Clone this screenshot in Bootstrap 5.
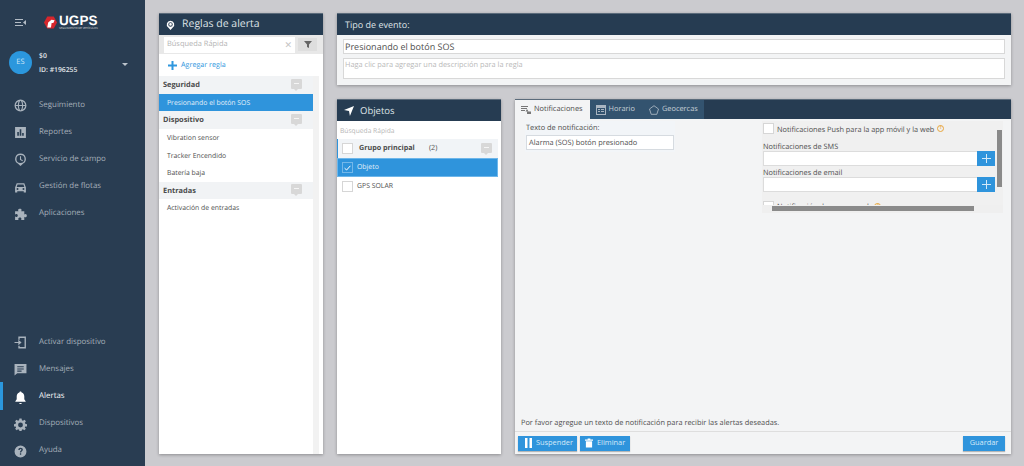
<!DOCTYPE html>
<html lang="es">
<head>
<meta charset="utf-8">
<title>Alertas</title>
<link href="https://cdn.jsdelivr.net/npm/bootstrap@5.3.0/dist/css/bootstrap.min.css" rel="stylesheet">
<style>
html,body{height:466px;overflow:hidden}
body{font-family:"Open Sans",sans-serif;font-size:7.4px;color:#4f4f4f;background:#cbcbcf;text-rendering:geometricPrecision}
.shell{height:466px}
.side{width:145px;background:#293d52;color:#a3adb8;flex:none}
.side svg{fill:#a9b3bd;flex:none}
.topline{height:40px;padding:4px 0 0 15px;gap:18px}
.logo-word{font-family:"Liberation Sans",sans-serif;font-weight:700;font-size:13.5px;color:#fff;line-height:11px;letter-spacing:.1px}
.logo-sub{font-size:2.8px;line-height:3px;color:#ddd;white-space:nowrap;margin-top:1px}
.userbox{height:47px;padding:10px 0 0 9px;gap:7px;color:#e4e8ec;font-size:6.8px;font-weight:600}
.avatar{width:23px;height:23px;border-radius:50%;background:#2b97dd;color:#cfe6f7;font-size:7.5px;font-weight:400;flex:none;margin-top:1px}
.user-lines{line-height:14px;flex:1;margin-top:-1px}
.caret-d{width:0;height:0;border:3px solid transparent;border-top:3.5px solid #bcc4cc;border-bottom:0;margin-right:17px;margin-left:auto}
.nav-it{height:27.2px;padding:2px 0 0 14px;gap:12px;font-size:7.9px;position:relative;color:#a3adb8}
.nav-it.on{color:#f2f4f6}
.nav-it.on svg{fill:#fff}
.nav-it.on::before{content:"";position:absolute;left:0;top:0;bottom:0;width:3px;background:#2b97dd}
.ico-w{width:13px;height:13px}
.stage{padding:13px 13px 12px 14px;gap:14px;min-width:0}
.pn{background:#fff;box-shadow:0 1px 3px rgba(0,0,0,.3);min-width:0}
.pn-left{width:164px;flex:none}
.rightcol{gap:14px;min-width:0}
.pn-top{height:72px;flex:none;background:#f3f4f5}
.pn-objs{width:164px;flex:none}
.lower{gap:14px;min-height:0}
.hd{height:22px;background:#263c52;color:#dfe3e7;font-size:10.5px;padding:1px 0 0 7px;gap:7px;flex:none;border-top:1px solid #5b6b7b}
.hd svg{fill:#fff}
.hd-evt{font-size:9px;padding-left:8px}
.hd-obj{font-size:9.5px;gap:6px}
.searchbar{height:19px;background:#e8e8e8;padding:0 6px 0 5px;gap:3px;flex:none}
.fake-input{height:16px;background:#fff;width:131px;padding:0 3px;color:#b4b4b4;font-size:7.45px;justify-content:space-between}
.filter-b{width:19px;height:13px;background:#dedede}
.addrow{height:22px;padding-left:9px;gap:4px;color:#2f97de;font-size:7.2px;flex:none}
.rules{padding-right:10px;flex:1;position:relative}
.rules::after{content:"";position:absolute;top:0;bottom:0;right:4px;width:6px;background:#f2f2f2}
.grp{height:17.6px;background:#f1f3f5;font-weight:700;color:#4b4b4b;padding:0 11px 0 4px;font-size:7.4px}
.grp-t{margin-top:2px}
.bub{width:11px;height:10px;background:#d8d8d8;position:relative;flex:none;border-radius:1px;margin-bottom:2px}
.bub::before{content:"";position:absolute;left:3px;right:3px;top:4px;height:1px;background:#f5f5f5}
.bub::after{content:"";position:absolute;left:3px;bottom:-2px;border:2.500px solid transparent;border-top-color:#d8d8d8;border-bottom:0}
.rule-it{height:17.6px;padding:3px 0 0 8px;font-size:6.85px;color:#4f4f4f}
.rule-it.sel{background:#2f94dc;color:#e4f0fa}
.qs{height:18px;padding:5px 0 0 3px;color:#b6b6b6;font-size:6.7px;line-height:9px;flex:none}
.objrow{height:19px;padding-left:5px;margin-right:3px;gap:4px;font-size:6.9px}
.objrow.grouphd{background:#f1f4f7;border-left:1px solid #2f94dc;padding-left:4px;gap:6px;padding-right:6px;color:#4b4b4b;font-size:7.2px}
.objrow.sel{background:#2f94dc;color:#e4f0fa;box-shadow:inset 0 0 0 1px #6db6ea}
.obj-t{margin-top:2px}
.box{width:11px;height:11px;background:#fff;border:1px solid #d6d6d6;flex:none}
.sel .box{background:#2f94dc;border-color:#73b8ea}
.title-in{height:15px;background:#fff;border:1px solid #d8d8d8;color:#4f4f4f;font-size:9px;padding:0 1px;line-height:13px;flex:none}
.desc-in{height:21px;background:#fff;border:1px solid #d8d8d8;color:#b9b9b9;font-size:7.4px;padding:1px 1px 0;line-height:11px;flex:none}
.top-body{padding:4px 6px 0 6px;gap:4px}
.tabsbar{height:20px;background:#263c52;flex:none;border-top:1px solid #5b6b7b}
.tab-x{background:#33536f;color:#c6ced6;height:100%;padding:0 7px 0 6px;gap:3px;font-size:7.4px}
.tab-x.on{background:#f3f4f5;color:#4d4d4d}
.tab-x.on svg{fill:#777}
.tab-geo{padding:0 6px 0 7px}
.tabbody{background:#f3f4f5;position:relative;min-height:0}
.cols{height:96px;flex:none;position:relative}
.leftform{width:150px;margin:2px 0 0 10px;padding:2px 1px 0;font-size:7.4px;line-height:10px;background:#f2f5f8;height:31px}
.txt-in{height:15px;width:148px;background:#fff;border:1px solid #d6dbe0;font-size:7.4px;margin-top:2px;padding-left:2px;color:#4f4f4f}
.rightclip{position:absolute;left:247px;top:2px;width:241px;height:84px;overflow:hidden;background:#f0f0f0;padding:2px 0 0 1px;font-size:7.33px;line-height:10px}
.rightform{width:232px}
.line-p{height:11px;gap:3px}
.line-t{margin-top:2px}
.info{width:7px;height:7px;border:1px solid #e8a63c;border-radius:50%;color:#e8a63c;font-size:5px;line-height:5px;text-align:center;font-weight:700;flex:none}
.lab{margin-top:7.500px;height:9.500px;line-height:11.500px}
.addin{height:15px;background:#fff;border:1px solid #dcdcdc;border-right:0}
.plus{width:18px;height:15px;background:#2f94dc;margin-left:auto;margin-top:-1px}
.bar-v{position:absolute;left:482px;top:11px;width:5px;height:57px;background:#8a8a8a}
.bar-h{position:absolute;left:257px;top:87px;width:202px;height:5px;background:#8a8a8a}
.track-h{position:absolute;left:247px;top:86px;width:241px;height:8px;background:#efefef}
.msg{margin-top:auto;padding:0 0 2px 6px;font-size:7.36px;color:#4f4f4f;line-height:12px}
.foot{height:23px;flex:none;border-top:1px solid #dedede;background:#f3f4f5;padding:0 6px 0 3px;gap:3px}
.bt{height:15px;background:#2f94dc;color:#d6e9f8;font-size:7.4px;gap:4px;border:0;border-radius:0;box-shadow:0 1px 1px rgba(0,0,0,.25);padding:0 4px 0 5px}
.bt svg{fill:#fff}
.bt-s{width:59px;padding-left:7px}
.bt-e{width:50px}
.bt-g{width:42px;justify-content:center;padding:0}
</style>
</head>
<body>
<div class="shell d-flex">
  <aside class="side d-flex flex-column">
    <div class="topline d-flex align-items-center">
      <svg width="11" height="9" viewBox="0 0 11 9"><path d="M0 1h8v1H0zM0 4h6v1H0zM0 7h8v1H0zM11 2 8 4.500l3 2.500z" fill="#b3bcc5"/></svg>
      <div class="d-flex align-items-center" style="gap:2px">
        <svg width="13" height="13" viewBox="0 0 14 14"><path d="M3.500 0.500h7L14 7l-3.500 6.500h-7L0 7z" style="fill:#d6262c"/><path d="M3.500 12.500l1-5.500 3.500-3 3.500.5L10 7.500H8.200L7.500 12.500z" style="fill:#fff"/></svg>
        <div><div class="logo-word">UGPS</div><div class="logo-sub">SEGUIMIENTO DE VEHÍCULOS</div></div>
      </div>
    </div>
    <div class="userbox d-flex">
      <div class="avatar d-flex align-items-center justify-content-center">ES</div>
      <div class="user-lines"><div>$0</div><div>ID: #196255</div></div>
      <div class="caret-d align-self-center" style="margin-top:-8px"></div>
    </div>
    <div class="nav-it d-flex align-items-center" style="margin-top:4px"><svg class="ico-w" viewBox="0 0 24 24"><path fill-rule="evenodd" d="M12 1a11 11 0 1 0 0 22 11 11 0 0 0 0-22zM3.300 11h3.800c.1-2.600.6-5 1.400-6.900A9 9 0 0 0 3.300 11zm5.800 0h5.800c-.2-3.700-1.500-7.500-2.900-8-1.400.5-2.700 4.300-2.900 8zm7.800 0h3.800a9 9 0 0 0-5.200-6.900c.8 1.900 1.300 4.300 1.400 6.900zM3.300 13a9 9 0 0 0 5.200 6.900c-.8-1.900-1.300-4.300-1.400-6.900zm5.800 0c.2 3.700 1.500 7.500 2.900 8 1.400-.5 2.700-4.300 2.900-8zm7.800 0c-.1 2.600-.6 5-1.400 6.900a9 9 0 0 0 5.200-6.900z"/></svg>Seguimiento</div>
    <div class="nav-it d-flex align-items-center"><svg class="ico-w" viewBox="0 0 24 24"><path fill-rule="evenodd" d="M2 2h20v20H2zM6 11v7h3v-7zm4.500-5v12h3V6zM15 13v5h3v-5z"/></svg>Reportes</div>
    <div class="nav-it d-flex align-items-center"><svg class="ico-w" viewBox="0 0 24 24"><path fill-rule="evenodd" d="M12 1a10 10 0 0 1 5 18.600L12 24l-5-4.400A10 10 0 0 1 12 1zm0 2.500a7.500 7.500 0 1 0 0 15 7.500 7.500 0 0 0 0-15zM11 6h2v5.500l3.500 2-1 1.700L11 12.600z"/></svg>Servicio de campo</div>
    <div class="nav-it d-flex align-items-center"><svg class="ico-w" viewBox="0 0 24 24"><path fill-rule="evenodd" d="M5 4h14l3 8v9h-4v-2H6v2H2v-9zm1.500 2.500L5 11h14l-1.500-4.500zM6.500 13a1.800 1.800 0 1 0 0 3.600 1.800 1.800 0 0 0 0-3.600zm11 0a1.800 1.800 0 1 0 0 3.600 1.800 1.800 0 0 0 0-3.600z"/></svg>Gestión de flotas</div>
    <div class="nav-it d-flex align-items-center"><svg class="ico-w" viewBox="0 0 24 24"><path d="M9 2c2-1.500 5-.5 5 1.800 0 1-.7 1.500-.7 2.200H19v6c.7 0 1.200-.7 2.200-.7 2.300 0 3.300 3 1.800 5-1 1.300-3 1.200-4 0v6H13c0-.8.700-1.200.7-2.200 0-2.300-3-3.300-5-1.800-1.300 1-1.200 3 0 4H2v-6.500c1 .5 1.500 1 2.500 1 2.300 0 3.300-3 1.800-5-1-1.300-3-1.200-4.300 0V6h6.300c0-.7-.8-1-.8-2 0-.8.400-1.500 1.300-2z"/></svg>Aplicaciones</div>
    <div class="mt-auto" style="padding-bottom:2px">
      <div class="nav-it d-flex align-items-center"><svg class="ico-w" viewBox="0 0 24 24"><path fill-rule="evenodd" d="M8 1h14v22H8v-5h2.500v2.500h9v-17h-9V7H8zM1 11h7V7l6 5-6 5v-4H1z"/></svg>Activar dispositivo</div>
      <div class="nav-it d-flex align-items-center"><svg class="ico-w" viewBox="0 0 24 24"><path fill-rule="evenodd" d="M1 2h22v17H6l-5 4zm5 4v2h12V6zm0 4v2h12v-2zm0 4v2h8v-2z"/></svg>Mensajes</div>
      <div class="nav-it on d-flex align-items-center"><svg class="ico-w" viewBox="0 0 24 24"><path d="M12 1c1 0 2 .8 2 1.800 3.500 1 5 4 5 7.200v5l2.500 4v1h-19v-1L5 15v-5c0-3.200 1.500-6.200 5-7.200C10 1.800 11 1 12 1zM9.500 22h5a2.500 2 0 0 1-5 0z"/></svg>Alertas</div>
      <div class="nav-it d-flex align-items-center"><svg class="ico-w" viewBox="0 0 24 24"><path fill-rule="evenodd" d="M10 1h4l.6 3.200 2 .8L19.400 3 22 6l-2 2.700.8 2L24 11.500v4l-3.200.4-.8 2L22 20l-3 2.600-2.500-1.800-2 .8L14 24h-4l-.6-2.400-2-.8L5 22.600 2 20l1.800-2.100-.8-2L0 15.500v-4l3-.8.800-2L2 6l2.600-3 2.800 2 2-.8zM12 8.500a4.500 4.500 0 1 0 0 9 4.500 4.500 0 0 0 0-9z"/></svg>Dispositivos</div>
      <div class="nav-it d-flex align-items-center"><svg class="ico-w" viewBox="0 0 24 24"><path fill-rule="evenodd" d="M12 1a11 11 0 1 1 0 22 11 11 0 0 1 0-22zM8 9h2.500c0-1 .6-1.800 1.600-1.800 1 0 1.600.6 1.600 1.400 0 1.700-2.800 2-2.800 5.400h2.400c0-2.300 3-2.700 3-5.600C16.300 6.300 14.400 5 12.100 5 9.700 5 8 6.700 8 9zm2.900 6.200V18h2.400v-2.800z"/></svg>Ayuda</div>
    </div>
  </aside>

  <main class="stage d-flex flex-grow-1">
    <section class="pn pn-left d-flex flex-column">
      <div class="hd d-flex align-items-center"><svg width="9" height="11" viewBox="0 0 24 28"><path fill-rule="evenodd" d="M12 1a10 10 0 0 1 6 18l-6 7-6-7a10 10 0 0 1 6-18zm0 4a6 6 0 1 0 0 12 6 6 0 0 0 0-12zm0 2.500a3.500 3.500 0 1 1 0 7 3.500 3.500 0 0 1 0-7z"/></svg>Reglas de alerta</div>
      <div class="searchbar d-flex align-items-center">
        <div class="fake-input d-flex align-items-center"><span>Búsqueda Rápida</span><span style="font-size:9px;color:#c5c5c5">✕</span></div>
        <div class="filter-b d-flex align-items-center justify-content-center ms-auto"><svg width="8" height="7" viewBox="0 0 8 7"><path d="M0 0h8L5 3.500V7L3 6V3.500z" fill="#666"/></svg></div>
      </div>
      <div class="addrow d-flex align-items-center"><svg width="9" height="9" viewBox="0 0 9 9"><path d="M3.500 0h2v3.500H9v2H5.500V9h-2V5.500H0v-2h3.500z" fill="#2f97de"/></svg>Agregar regla</div>
      <div class="rules">
        <div class="grp d-flex align-items-center justify-content-between"><span class="grp-t">Seguridad</span><span class="bub"></span></div>
        <div class="rule-it sel d-flex align-items-center">Presionando el botón SOS</div>
        <div class="grp d-flex align-items-center justify-content-between"><span class="grp-t">Dispositivo</span><span class="bub"></span></div>
        <div class="rule-it d-flex align-items-center">Vibration sensor</div>
        <div class="rule-it d-flex align-items-center">Tracker Encendido</div>
        <div class="rule-it d-flex align-items-center">Batería baja</div>
        <div class="grp d-flex align-items-center justify-content-between"><span class="grp-t">Entradas</span><span class="bub"></span></div>
        <div class="rule-it d-flex align-items-center">Activación de entradas</div>
      </div>
    </section>

    <div class="rightcol d-flex flex-column flex-grow-1">
      <section class="pn pn-top d-flex flex-column">
        <div class="hd hd-evt d-flex align-items-center">Tipo de evento:</div>
        <div class="top-body d-flex flex-column">
          <div class="title-in">Presionando el botón SOS</div>
          <div class="desc-in">Haga clic para agregar una descripción para la regla</div>
        </div>
      </section>

      <div class="lower d-flex flex-grow-1">
        <section class="pn pn-objs d-flex flex-column">
          <div class="hd hd-obj d-flex align-items-center"><svg width="10" height="10" viewBox="0 0 11 11"><path d="M11 0 6.500 11 5.500 5.500 0 4.500z"/></svg>Objetos</div>
          <div class="qs">Búsqueda Rápida</div>
          <div class="objrow grouphd d-flex align-items-center"><span class="box"></span><b class="fw-bold" style="width:60px">Grupo principal</b><span class="ms-1">(2)</span><span class="bub ms-auto"></span></div>
          <div class="objrow sel d-flex align-items-center"><span class="box d-flex align-items-center justify-content-center"><svg width="7" height="6" viewBox="0 0 7 6"><path d="M.6 3.200 2.600 5 6.400.8" fill="none" stroke="#fff" stroke-width="1"/></svg></span><span class="obj-t">Objeto</span></div>
          <div class="objrow d-flex align-items-center"><span class="box"></span><span class="obj-t">GPS SOLAR</span></div>
        </section>

        <section class="pn d-flex flex-column flex-grow-1" style="min-width:0">
          <div class="tabsbar d-flex align-items-stretch">
            <div class="tab-x on d-flex align-items-center"><svg width="10" height="8" viewBox="0 0 10 8"><path d="M0 0h7v1H0zM0 2h6v1H0zM0 4h4v1H0zM6 3l1.500 2.500h-3z"/><path d="M6 5.500h4V8H6z"/></svg>Notificaciones</div>
            <div class="tab-x d-flex align-items-center"><svg width="10" height="10" viewBox="0 0 10 10"><path fill="#a9b5c1" fill-rule="evenodd" d="M0 0h10v10H0zm1 3v6h8V3zm1 1h2v1H2zm3 0h3v1H5zM2 6h2v1H2zm3 0h3v1H5z"/></svg>Horario</div>
            <div class="tab-x tab-geo d-flex align-items-center"><svg width="10" height="10" viewBox="0 0 10 10"><path d="M5 .7 9.500 4 7.800 9.300H2.200L.5 4z" fill="none" stroke="#b8c2cc" stroke-width=".8"/></svg>Geocercas</div>
          </div>
          <div class="tabbody d-flex flex-column flex-grow-1">
            <div class="cols">
              <div class="leftform">Texto de notificación:<div class="txt-in d-flex align-items-center">Alarma (SOS) botón presionado</div></div>
              <div class="rightclip">
                <div class="rightform">
                  <div class="line-p d-flex align-items-center"><span class="box"></span><span class="line-t">Notificaciones Push para la app móvil y la web</span><span class="info">!</span></div>
                  <div class="lab">Notificaciones de SMS</div>
                  <div class="addin"><div class="plus d-flex align-items-center justify-content-center"><svg width="9" height="9" viewBox="0 0 9 9"><path d="M4 0h1v4h4v1H5v4H4V5H0V4h4z" fill="#d4e9f8"/></svg></div></div>
                  <div class="lab" style="margin-top:1.500px">Notificaciones de email</div>
                  <div class="addin"><div class="plus d-flex align-items-center justify-content-center"><svg width="9" height="9" viewBox="0 0 9 9"><path d="M4 0h1v4h4v1H5v4H4V5H0V4h4z" fill="#d4e9f8"/></svg></div></div>
                  <div class="line-p d-flex align-items-center" style="margin-top:9px"><span class="box"></span><span>Notificación de voz por web</span><span class="info">!</span></div>
                </div>
              </div>
              <div class="bar-v"></div>
              <div class="track-h"></div>
              <div class="bar-h"></div>
            </div>
            <div class="msg">Por favor agregue un texto de notificación para recibir las alertas deseadas.</div>
            <div class="foot d-flex align-items-center">
              <button class="btn bt bt-s d-flex align-items-center" type="button"><svg width="7" height="10" viewBox="0 0 7 10"><path d="M0 0h2.500v10H0zM4.500 0H7v10H4.500z"/></svg>Suspender</button>
              <button class="btn bt bt-e d-flex align-items-center" type="button"><svg width="8" height="10" viewBox="0 0 9 10"><path d="M3 0h3v1h3v1.500H0V1h3zM1 3h7v7H1z"/></svg>Eliminar</button>
              <button class="btn bt bt-g d-flex align-items-center ms-auto" type="button">Guardar</button>
            </div>
          </div>
        </section>
      </div>
    </div>
  </main>
</div>
<script src="https://cdn.jsdelivr.net/npm/bootstrap@5.3.0/dist/js/bootstrap.bundle.min.js"></script>
</body>
</html>
